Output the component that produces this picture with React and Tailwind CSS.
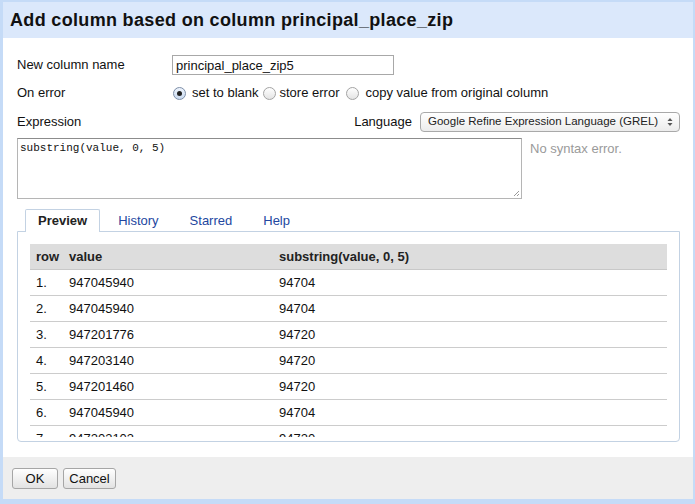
import React from "react";

const rows = [
  ["1.", "947045940", "94704"],
  ["2.", "947045940", "94704"],
  ["3.", "947201776", "94720"],
  ["4.", "947203140", "94720"],
  ["5.", "947201460", "94720"],
  ["6.", "947045940", "94704"],
  ["7.", "947203103", "94720"],
];

const Radio = ({ checked }) => (
  <span
    className={
      "inline-flex items-center justify-center w-[13px] h-[13px] rounded-full border shrink-0 " +
      (checked
        ? "border-[#7d8ea8] bg-gradient-to-b from-[#eef4fc] to-[#c9daf0]"
        : "border-[#a3a3a3] bg-gradient-to-b from-white to-[#e4e4e4]")
    }
  >
    {checked && <span className="w-[5px] h-[5px] rounded-full bg-[#222]" />}
  </span>
);

const App = () => {
  return (
    <div
      className="w-[695px] h-[504px] bg-[#c5dbf7] pt-[2px] pl-[3px] pr-[2px] pb-[5px] flex flex-col text-[13px] text-[#111]"
      style={{ fontFamily: '"Liberation Sans", Arial, sans-serif' }}
    >
      {/* title bar */}
      <div className="h-[36px] shrink-0 bg-[#dbe8fb] flex items-center pl-[7px] text-[18px] tracking-[0.33px] font-bold text-[#111]">
        Add column based on column principal_place_zip
      </div>

      {/* body */}
      <div className="flex-1 bg-white pl-[14px] pr-[13px] pt-[17px]">
        <div className="flex items-center h-[20px]">
          <div className="w-[155px]">New column name</div>
          <input
            defaultValue="principal_place_zip5"
            className="w-[222px] h-[20px] border border-[#a8a8a8] px-[3px] text-[13px] outline-none"
          />
        </div>

        <div className="flex items-center h-[18px] mt-[9px]">
          <div className="w-[156px]">On error</div>
          <Radio checked />
          <span className="ml-[6px] mr-[4px]">set to blank</span>
          <Radio />
          <span className="ml-[4px] mr-[7px]">store error</span>
          <Radio />
          <span className="ml-[6px]">copy value from original column</span>
        </div>

        <div className="flex items-center justify-between h-[20px] mt-[10px]">
          <div>Expression</div>
          <div className="flex items-center gap-[8px]">
            <span>Language</span>
            <div className="w-[260px] h-[20px] rounded-[4px] border border-[#a9a9a9] bg-gradient-to-b from-white to-[#ececec] flex items-center justify-between pl-[7px] pr-[6px] text-[11.5px] text-[#222]">
              <span>Google Refine Expression Language (GREL)</span>
              <svg width="6" height="10" viewBox="0 0 6 10">
                <path d="M3 1 L5.5 4 L0.5 4 Z" fill="#555" />
                <path d="M3 9 L5.5 6 L0.5 6 Z" fill="#555" />
              </svg>
            </div>
          </div>
        </div>

        <div className="flex mt-[6px]">
          <div className="relative w-[505px] h-[61px] border border-[#b5b5b5] border-t-[#8c8c8c] px-[2px] pt-[1px]">
            <div
              className="text-[11px] text-[#111]"
              style={{ fontFamily: '"Liberation Mono", "Courier New", monospace' }}
            >
              substring(value, 0, 5)
            </div>
            <svg className="absolute right-[1px] bottom-[1px]" width="8" height="8" viewBox="0 0 8 8">
              <path d="M7 2 L2 7 M7 5 L5 7" stroke="#999" strokeWidth="1" />
            </svg>
          </div>
          <div className="ml-[8px] mt-[1px] text-[#9a9a9a]">No syntax error.</div>
        </div>

        {/* tabs */}
        <div className="flex pl-[8px] mt-[10px] h-[23px] relative z-10">
          <div className="h-[23px] border border-b-0 border-[#c3d2e3] rounded-t-[2px] bg-white px-[12px] flex items-center font-bold text-[#222]">
            Preview
          </div>
          <div className="ml-[5px] px-[13px] flex items-center text-[#23479f]">History</div>
          <div className="ml-[5px] px-[13px] flex items-center text-[#23479f]">Starred</div>
          <div className="ml-[5px] px-[13px] flex items-center text-[#23479f]">Help</div>
        </div>
        <div className="-mt-[1px] h-[211px] border border-[#c3d2e3] rounded-b-[4px] px-[12px] pt-[12px] pb-[4px]">
          <div className="h-[193px] overflow-hidden">
            <div className="flex items-center h-[26px] bg-[#dddddd] border-b border-[#c8c8c8] font-bold text-[#222]">
              <div className="w-[33px] pl-[6px]">row</div>
              <div className="w-[210px] pl-[6px]">value</div>
              <div className="pl-[6px]">substring(value, 0, 5)</div>
            </div>
            {rows.map((r) => (
              <div key={r[0]} className="flex items-center h-[26px] border-b border-[#cccccc]">
                <div className="w-[33px] pl-[6px]">{r[0]}</div>
                <div className="w-[210px] pl-[6px]">{r[1]}</div>
                <div className="pl-[6px]">{r[2]}</div>
              </div>
            ))}
          </div>
        </div>
      </div>

      {/* footer */}
      <div className="h-[42px] shrink-0 bg-[#eeeeee] pl-[9px] pt-[11px] flex gap-[5px]">
        <button className="w-[46px] h-[21px] rounded-[3px] border border-[#a6a6a6] bg-gradient-to-b from-white to-[#e2e2e2] text-[13px] text-[#111]">
          OK
        </button>
        <button className="w-[53px] h-[21px] rounded-[3px] border border-[#a6a6a6] bg-gradient-to-b from-white to-[#e2e2e2] text-[13px] text-[#111]">
          Cancel
        </button>
      </div>
    </div>
  );
};

export default App;
